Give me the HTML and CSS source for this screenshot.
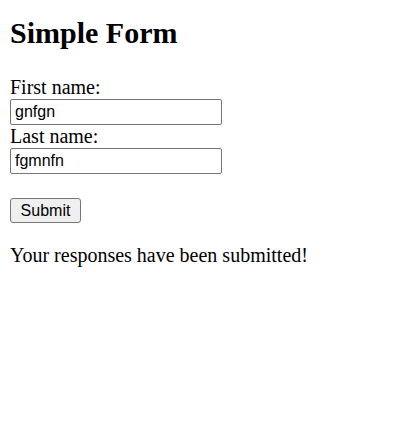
FILE: index.html
```html
<!DOCTYPE html>
<html>
<head>
<meta charset="utf-8">
<title>Simple Form</title>
<link rel="stylesheet" href="styles.css">
</head>
<body>
<h1 class="title">Simple Form</h1>
<form class="form">
  <label class="label" for="first">First name:</label>
  <input class="field" id="first" type="text" value="gnfgn">
  <label class="label" for="last">Last name:</label>
  <input class="field" id="last" type="text" value="fgmnfn">
  <button class="submit" type="button">Submit</button>
</form>
<p class="message">Your responses have been submitted!</p>
</body>
</html>
```

FILE: styles.css
```css
html, body {
  background: #ffffff;
}
body {
  margin: 0;
  padding: 0 10px;
  font-family: "Liberation Serif", "Times New Roman", serif;
  font-size: 20px;
  color: #000000;
}
.title {
  font-size: 30px;
  font-weight: bold;
  line-height: 34px;
  margin: 16px 0 26px;
}
.form {
  display: flex;
  flex-direction: column;
  align-items: flex-start;
}
.label {
  display: block;
  line-height: 23px;
  height: 23px;
}
.field {
  box-sizing: border-box;
  width: 212px;
  height: 26px;
  margin: 0;
  padding: 1px 4px;
  border: 1px solid #767676;
  border-radius: 2px;
  font-family: "Liberation Sans", Arial, sans-serif;
  font-size: 16px;
  color: #000000;
  background: #ffffff;
}
.submit {
  box-sizing: border-box;
  margin-top: 24px;
  width: 71px;
  height: 25px;
  padding: 0 6px;
  border: 1px solid #767676;
  border-radius: 3px;
  background: #efefef;
  font-family: "Liberation Sans", Arial, sans-serif;
  font-size: 16px;
  color: #000000;
}
.message {
  margin: 21px 0 0;
  line-height: 23px;
}
```
